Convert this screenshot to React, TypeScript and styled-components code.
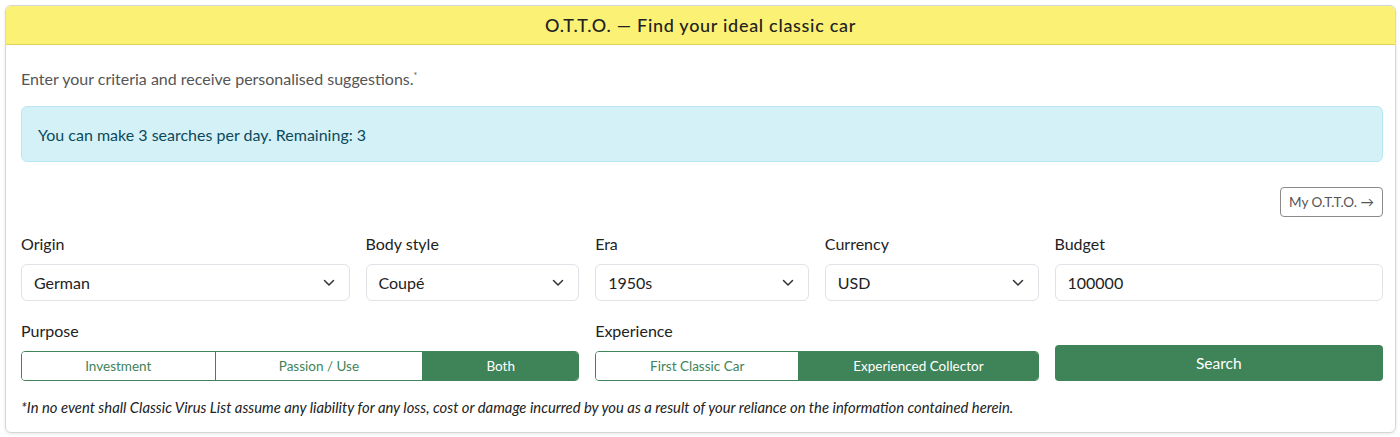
import styled, { createGlobalStyle } from "styled-components";

const GlobalStyle = createGlobalStyle`
    body {
        margin: 0;
        background: #ffffff;
        font-family: Lato, "Open Sans", sans-serif;
        color: #212529;
    }
`

const Page = styled.div`
    padding: 5px 4px 4px 5px;
`

const Card = styled.div`
    border: 1px solid #d6d6d6;
    border-radius: 6px;
    overflow: hidden;
    box-shadow: 0 1px 3px rgba(0, 0, 0, 0.1);
`

const Header = styled.div`
    background: #fbf175;
    border-bottom: 1px solid #e2d35a;
    height: 38px;
    display: flex;
    align-items: center;
    justify-content: center;
    font-size: 18px;
    letter-spacing: 0.7px;
    font-weight: 500;
    color: #222;
`

const Body = styled.div`
    padding: 19px 12px 15px 15px;
`

const Intro = styled.p`
    margin: 0 0 15px;
    font-size: 16px;
    line-height: 24px;
    color: #555;
    sup {
        font-size: 9px;
    }
`

const Alert = styled.div`
    background: #d5f1f8;
    border: 1px solid #b7e7f3;
    border-radius: 6px;
    height: 54px;
    padding: 0 16px;
    display: flex;
    align-items: center;
    font-size: 16px;
    color: #0b4a5a;
`

const TopBar = styled.div`
    display: flex;
    justify-content: flex-end;
    margin-top: 25px;
`

const GhostButton = styled.button`
    font-family: inherit;
    font-size: 13.5px;
    color: #555;
    background: #fff;
    border: 1px solid #8a8a8a;
    border-radius: 4px;
    height: 30px;
    padding: 0 8px;
`

const Grid = styled.div<{ $top: number }>`
    display: grid;
    grid-template-columns: repeat(12, 1fr);
    column-gap: 16px;
    align-items: end;
    margin-top: ${p => p.$top}px;
`

const Field = styled.div<{ $span: number }>`
    grid-column: span ${p => p.$span};
    display: flex;
    flex-direction: column;
`

const Label = styled.label`
    font-size: 16px;
    line-height: 24px;
    color: #222;
    margin-bottom: 8px;
`

const Box = styled.div`
    height: 37px;
    box-sizing: border-box;
    border: 1px solid #dfe2e6;
    border-radius: 6px;
    display: flex;
    align-items: center;
    justify-content: space-between;
    padding: 0 14px 0 12px;
    font-size: 16px;
    color: #222;
`

const Segments = styled.div`
    display: flex;
    height: 30px;
    box-sizing: border-box;
    border: 1px solid #3f8458;
    border-radius: 4px;
    overflow: hidden;
`

const Segment = styled.div<{ $active?: boolean }>`
    flex: 1 1 auto;
    display: flex;
    align-items: center;
    justify-content: center;
    font-size: 13.5px;
    color: ${p => (p.$active ? "#fff" : "#3f8458")};
    background: ${p => (p.$active ? "#3f8458" : "#fff")};
    border-left: 1px solid #3f8458;
    &:first-child {
        border-left: none;
    }
`

const SearchButton = styled.button`
    font-family: inherit;
    height: 36px;
    border: none;
    border-radius: 4px;
    background: #3f8458;
    color: #fff;
    font-size: 15.5px;
`

const Disclaimer = styled.p`
    margin: 16px 0 0;
    font-size: 14.8px;
    line-height: 20px;
    font-style: italic;
    color: #222;
`

const Chevron = () => (
    <svg width="12" height="8" viewBox="0 0 12 8" fill="none">
        <path d="M1.5 1.5 L6 6 L10.5 1.5" stroke="#333" strokeWidth="1.5" strokeLinecap="round" strokeLinejoin="round" />
    </svg>
)

type Select = { label: string; value: string; span: number; arrow?: boolean }

const selects: Select[] = [
    { label: "Origin", value: "German", span: 3, arrow: true },
    { label: "Body style", value: "Coupé", span: 2, arrow: true },
    { label: "Era", value: "1950s", span: 2, arrow: true },
    { label: "Currency", value: "USD", span: 2, arrow: true },
    { label: "Budget", value: "100000", span: 3 },
]

const App = () => {
    return (
        <Page>
            <GlobalStyle />
            <Card>
                <Header>O.T.T.O. — Find your ideal classic car</Header>
                <Body>
                    <Intro>Enter your criteria and receive personalised suggestions.<sup>*</sup></Intro>
                    <Alert>You can make 3 searches per day. Remaining: 3</Alert>
                    <TopBar>
                        <GhostButton>My O.T.T.O. →</GhostButton>
                    </TopBar>
                    <Grid $top={15}>
                        {selects.map(s => (
                            <Field key={s.label} $span={s.span}>
                                <Label>{s.label}</Label>
                                <Box>
                                    {s.value}
                                    {s.arrow && <Chevron />}
                                </Box>
                            </Field>
                        ))}
                    </Grid>
                    <Grid $top={18}>
                        <Field $span={5}>
                            <Label>Purpose</Label>
                            <Segments>
                                <Segment>Investment</Segment>
                                <Segment>Passion / Use</Segment>
                                <Segment $active>Both</Segment>
                            </Segments>
                        </Field>
                        <Field $span={4}>
                            <Label>Experience</Label>
                            <Segments>
                                <Segment>First Classic Car</Segment>
                                <Segment $active>Experienced Collector</Segment>
                            </Segments>
                        </Field>
                        <Field $span={3}>
                            <SearchButton>Search</SearchButton>
                        </Field>
                    </Grid>
                    <Disclaimer>*In no event shall Classic Virus List assume any liability for any loss, cost or damage incurred by you as a result of your reliance on the information contained herein.</Disclaimer>
                </Body>
            </Card>
        </Page>
    )
}

export default App
